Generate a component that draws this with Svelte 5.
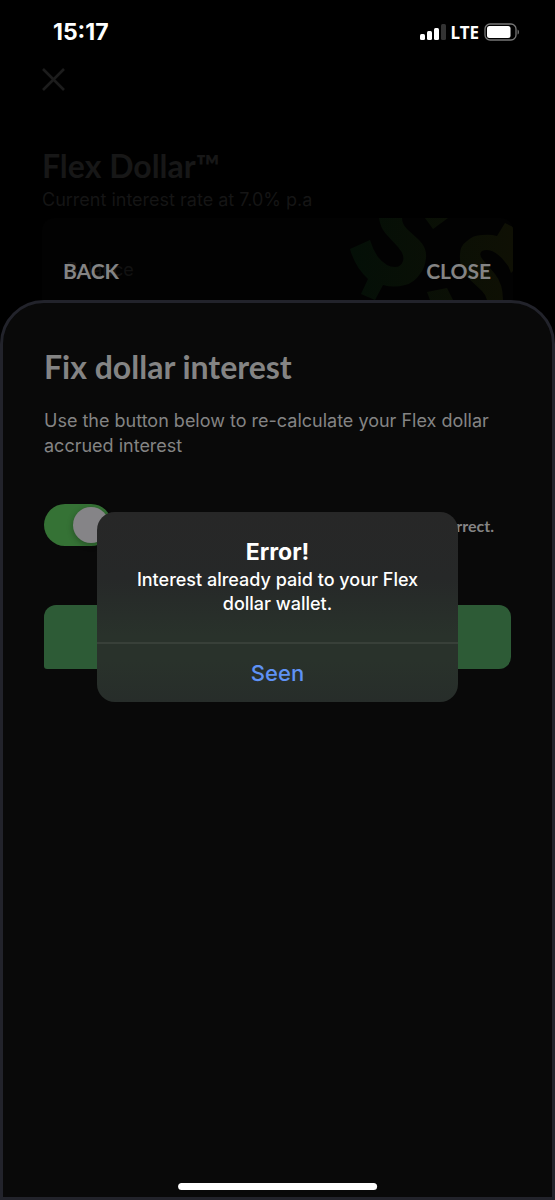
<script>
    let recalculate = true;
    let showAlert = true;

    const account = {
        name: 'Flex Dollar™',
        rate: 'Current interest rate at 7.0% p.a'
    };

    function dismissAlert() {
        showAlert = false;
    }
</script>

<div class="screen">
    <header class="status-bar">
        <time>15:17</time>
        <div class="status-icons">
            <svg width="26" height="18" viewBox="0 0 26 18" aria-hidden="true">
                <rect x="0" y="11" width="5" height="6" rx="1.5" fill="#fff" />
                <rect x="7" y="8" width="5" height="9" rx="1.5" fill="#fff" />
                <rect x="14" y="5" width="5" height="12" rx="1.5" fill="#fff" />
                <rect x="21" y="1" width="5" height="16" rx="1.5" fill="#333" />
            </svg>
            <span class="network">LTE</span>
            <svg width="36" height="18" viewBox="0 0 36 18" aria-hidden="true">
                <rect x="1" y="1" width="31" height="16" rx="5" fill="none" stroke="#777" stroke-width="1.3" />
                <rect x="3" y="3" width="23.5" height="12" rx="2.5" fill="#fff" />
                <path d="M33.6 6.4v5.2c1.8-.9 1.8-4.3 0-5.2z" fill="#777" />
            </svg>
        </div>
    </header>

    <main class="account">
        <button class="dismiss" aria-label="Dismiss">
            <svg width="24" height="24" viewBox="0 0 24 24" aria-hidden="true">
                <path d="M1 1l21 21M22 1l-21 21" stroke="#1c1c1c" stroke-width="2.6" />
            </svg>
        </button>
        <h1>{account.name}</h1>
        <p class="rate">{account.rate}</p>

        <section class="card">
            <span class="balance">Balance</span>
            <svg class="pattern" width="166" height="82" viewBox="347 218 166 82" aria-hidden="true">
                <defs>
                    <linearGradient id="tint" x1="350" y1="0" x2="513" y2="0" gradientUnits="userSpaceOnUse">
                        <stop offset="0" stop-color="#040f07" />
                        <stop offset="1" stop-color="#0f1004" />
                    </linearGradient>
                </defs>
                <g fill="url(#tint)">
                    <path d="M350 249L370 240Q373 250 378 257Q386 267 395 267Q401 267 403 261Q405 255 398 247L386 234Q380 227 379 218H402Q402 224 407 229L419 240Q427 248 426 258Q425 268 420 274Q414 283 405 285Q394 288 383 285L375 300L361 294L368 279Q355 267 350 249Z" />
                    <path d="M425 218H448L433 229Z" />
                    <path d="M460 254Q460 246 467 241Q473 235 482 235Q490 234 497 236L505 223L513 227V271L511 273Q509 266 505 262Q499 254 492 251Q486 249 482 251Q478 254 483 260L495 274Q503 284 503 300H487Q486 295 482 291L466 276Q459 267 460 254Z" />
                    <path d="M427 292L447 288L453 300H430Z" />
                </g>
            </svg>
            <nav class="sheet-nav">
                <button>BACK</button>
                <button>CLOSE</button>
            </nav>
        </section>
    </main>

    <section class="sheet">
        <h2>Fix dollar interest</h2>
        <p class="intro">Use the button below to re-calculate your Flex dollar accrued interest</p>

        <label class="confirm">
            <input type="checkbox" role="switch" bind:checked={recalculate} />
            <span>correct.</span>
        </label>

        <button class="submit" aria-label="Fix interest"></button>
    </section>

    {#if showAlert}
        <div class="overlay">
            <div class="alert" role="alertdialog" aria-labelledby="alert-title" aria-describedby="alert-text">
                <div class="alert-body">
                    <h3 id="alert-title">Error!</h3>
                    <p id="alert-text">Interest already paid to your Flex dollar wallet.</p>
                </div>
                <button class="seen" on:click={dismissAlert}>Seen</button>
            </div>
        </div>
    {/if}

    <div class="home-indicator"></div>
</div>

<style>
    :global(body) {
        margin: 0;
        background: #000;
    }

    .screen {
        position: relative;
        display: flex;
        flex-direction: column;
        min-height: 100vh;
        background: #000;
        color: #848484;
        font-family: Inter, "Liberation Sans", sans-serif;
    }

    h1, h2, h3, p {
        margin: 0;
    }

    button {
        padding: 0;
        border: none;
        background: none;
        color: inherit;
        font: inherit;
        cursor: pointer;
    }

    svg {
        display: block;
    }

    .status-bar {
        display: flex;
        justify-content: space-between;
        align-items: center;
        height: 64px;
        padding: 0 35px 0 53px;
        color: #fff;
    }

    time {
        font-size: 23px;
        font-weight: 700;
    }

    .status-icons {
        display: flex;
        align-items: center;
        gap: 5px;
    }

    .network {
        font-family: "Noto Sans", sans-serif;
        font-size: 17px;
        font-weight: 700;
    }

    /* Account page behind the sheet */
    .account {
        padding: 0 42px;
    }

    .dismiss {
        display: block;
        padding: 4px 0;
    }

    h1 {
        margin-top: 50px;
        color: #171717;
        font-family: Lato, sans-serif;
        font-size: 32px;
        font-weight: 700;
        line-height: 40px;
    }

    .rate {
        margin-top: 2px;
        color: #151515;
        font-size: 18px;
        line-height: 24px;
    }

    .card {
        position: relative;
        display: flex;
        justify-content: space-between;
        align-items: center;
        height: 82px;
        margin-top: 6px;
        border-radius: 12px 12px 0 0;
        background: #020202;
        overflow: hidden;
    }

    .balance {
        padding: 20px 0 0 24px;
        color: #121212;
        font-size: 18px;
    }

    .sheet-nav {
        position: absolute;
        inset: 33px 22px auto 21px;
        display: flex;
        justify-content: space-between;
        font-family: Lato, sans-serif;
        font-size: 21px;
        font-weight: 700;
        line-height: 40px;
    }

    /* Bottom sheet */
    .sheet {
        flex: 1;
        padding: 44px 41px;
        border: 3px solid #22232b;
        border-radius: 44px 44px 0 0;
        background: #090909;
    }

    h2 {
        font-family: Lato, sans-serif;
        font-size: 32px;
        font-weight: 700;
        line-height: 40px;
    }

    .intro {
        margin-top: 21px;
        font-size: 18px;
        line-height: 25px;
    }

    .confirm {
        display: flex;
        justify-content: space-between;
        align-items: center;
        margin-top: 46px;
        padding-right: 17px;
        font-family: Lato, sans-serif;
        font-size: 16px;
        font-weight: 700;
    }

    .confirm input {
        appearance: none;
        width: 68px;
        height: 42px;
        margin: 0;
        padding: 3px;
        border-radius: 21px;
        background: #333;
    }

    .confirm input::before {
        content: '';
        display: block;
        width: 36px;
        height: 36px;
        border-radius: 50%;
        background: #858487;
        box-shadow: 0 2px 6px rgba(0, 0, 0, 0.3);
    }

    .confirm input:checked {
        background: #357235;
    }

    .confirm input:checked::before {
        margin-left: 26px;
    }

    .submit {
        display: block;
        width: 100%;
        height: 64px;
        margin-top: 59px;
        border-radius: 12px 12px 12px 3px;
        background: #2d5b36;
    }

    /* Alert */
    .overlay {
        position: absolute;
        inset: 0;
        display: flex;
        justify-content: center;
        align-items: center;
        padding-top: 14px;
    }

    .alert {
        width: 65%;
        border-radius: 18px;
        background: linear-gradient(#272727, #262828 35%, #29322b 65%, #29322b 78%, #272d2a);
        color: #fff;
        text-align: center;
        overflow: hidden;
    }

    .alert-body {
        padding: 25px 36px 26px;
        border-bottom: 2px solid #384039;
    }

    h3 {
        font-size: 23px;
        font-weight: 700;
        line-height: 30px;
    }

    .alert-body p {
        padding-top: 1px;
        font-size: 18px;
        font-weight: 500;
        line-height: 24px;
    }

    .seen {
        width: 100%;
        color: #5f92f5;
        font-size: 22px;
        font-weight: 500;
        line-height: 58px;
    }

    .home-indicator {
        position: absolute;
        bottom: 10px;
        left: 50%;
        width: 36%;
        height: 7px;
        border-radius: 4px;
        background: #fff;
        transform: translateX(-50%);
    }
</style>
